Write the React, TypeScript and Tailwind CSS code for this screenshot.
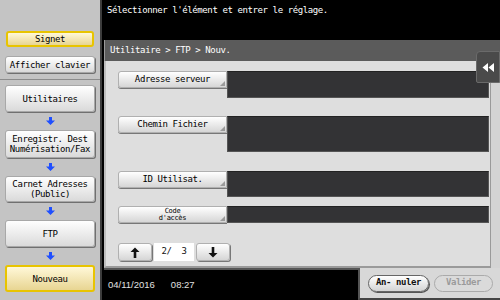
import React from 'react';

const mono = "font-['DejaVu_Sans_Mono','Liberation_Mono',monospace] text-[9px] tracking-[-0.4px]";

const BlueArrow = () => (
  <div className="h-[18px] flex items-center justify-center">
    <svg width="9" height="8" viewBox="0 0 9 8">
      <path d="M3 0h3v3.5h3L4.5 8 0 3.5h3z" fill="#1f4fff" />
    </svg>
  </div>
);

const SideButton = ({ label, yellow = false, h = 'h-[27px]' }: { label: React.ReactNode; yellow?: boolean; h?: string }) => (
  <div
    className={`${h} mx-[5px] rounded-[3px] flex items-center justify-center text-center leading-[10px] text-black ${mono} ${
      yellow
        ? 'bg-gradient-to-b from-[#fff8d8] to-[#e8d592] border-2 border-[#e8c400]'
        : 'bg-gradient-to-b from-white to-[#dadada] border border-[#a8a8a8] shadow-[1px_1px_0_#707070]'
    }`}
  >
    {label}
  </div>
);

const FieldRow = ({ label, fieldH, small = false }: { label: React.ReactNode; fieldH: string; small?: boolean }) => (
  <div className="flex items-start">
    <div
      className={`relative w-[109px] h-[17px] rounded-l-[3px] bg-gradient-to-b from-white to-[#d6d6d6] border border-[#b0b0b0] shadow-[0_1px_0_#777] flex items-center justify-center text-center text-black ${
        small ? "font-['DejaVu_Sans_Mono',monospace] text-[7px] leading-[7px] tracking-[-0.3px]" : mono
      }`}
    >
      {label}
      <div className="absolute right-[1px] bottom-[1px] w-0 h-0 border-l-[5px] border-l-transparent border-b-[5px] border-b-[#9a9a9a]" />
    </div>
    <div className={`flex-1 ${fieldH} bg-[#333335] border border-[#555] border-t-[#222]`} />
  </div>
);

export default function App() {
  return (
    <div className="w-[500px] h-[300px] flex bg-black overflow-hidden">
      {/* sidebar */}
      <div className="w-[102px] h-full bg-[#c4c4c4] border-r-2 border-[#3c3c3c] flex flex-col">
        <div className="h-[80px] pt-[31px] flex flex-col gap-[9px] border-b border-[#8c8c8c]">
          <SideButton label="Signet" yellow h="h-[16px] mx-[6px]" />
          <SideButton label="Afficher clavier" h="h-[17px]" />
        </div>
        <div className="pt-[5px] flex flex-col">
          <SideButton label="Utilitaires" />
          <BlueArrow />
          <SideButton label={<span>Enregistr. Dest<br />Numérisation/Fax</span>} h="h-[28px]" />
          <BlueArrow />
          <SideButton label={<span>Carnet Adresses<br />(Public)</span>} h="h-[26px]" />
          <BlueArrow />
          <SideButton label="FTP" />
          <BlueArrow />
          <SideButton label="Nouveau" yellow h="h-[27px]" />
        </div>
      </div>

      {/* main */}
      <div className="flex-1 flex flex-col pl-[2px]">
        <div className={`h-[40px] px-[3px] pt-[4px] text-white ${mono} text-[9.5px]`}>
          Sélectionner l'élément et entrer le réglage.
        </div>

        <div className="relative h-[228px] flex flex-col">
          <div className={`h-[21px] bg-[#5b5b5b] border-l border-[#9a9a9a] flex items-center px-[5px] text-white ${mono} text-[9.5px]`}>
            Utilitaire &gt; FTP &gt; Nouv.
          </div>
          <div className="flex-1 flex">
            <div className="flex-1 bg-[#dedede] border-l-2 border-[#bdbdbd] border-b-2 border-b-[#9a9a9a] pl-[12px] pr-[1px] pt-[10px] flex flex-col">
              <FieldRow label="Adresse serveur" fieldH="h-[27px]" />
              <div className="h-[18px]" />
              <FieldRow label="Chemin Fichier" fieldH="h-[36px]" />
              <div className="h-[19px]" />
              <FieldRow label="ID Utilisat." fieldH="h-[26px]" />
              <div className="h-[9px]" />
              <FieldRow label={<span>Code<br />d'accès</span>} fieldH="h-[17px]" small />
              <div className="h-[20px] shrink-0" />
              <div className="flex items-center h-[18px]">
                <div className="w-[34px] h-[18px] rounded-[3px] bg-gradient-to-b from-white to-[#d6d6d6] border border-[#b0b0b0] shadow-[1px_1px_0_#777] flex items-center justify-center">
                  <svg width="10" height="11" viewBox="0 0 10 11">
                    <path d="M5 0.5L9.5 5H6.3v6H3.7V5H0.5z" fill="#111" />
                  </svg>
                </div>
                <div className={`w-[40px] h-[18px] mx-[2px] bg-white flex items-center justify-center text-[#111] ${mono}`}>
                  2/&nbsp;&nbsp;3
                </div>
                <div className="w-[34px] h-[18px] rounded-[3px] bg-gradient-to-b from-white to-[#d6d6d6] border border-[#b0b0b0] shadow-[1px_1px_0_#777] flex items-center justify-center">
                  <svg width="10" height="11" viewBox="0 0 10 11">
                    <path d="M5 10.5L9.5 6H6.3V0H3.7v6H0.5z" fill="#111" />
                  </svg>
                </div>
              </div>
            </div>
            <div className="w-[10px] bg-[#d4d4d4] border-l border-[#9a9a9a]" />
          </div>

          {/* side tab */}
          <div className="absolute right-0 top-[11px] w-[24px] h-[32px] rounded-tl-[4px] rounded-bl-[2px] bg-[#4a4a4a] border border-[#6a6a6a] flex items-center justify-center">
            <svg width="12" height="9" viewBox="0 0 12 9">
              <path d="M6 0v9L0.5 4.5z M12 0v9L6.5 4.5z" fill="#fff" />
            </svg>
          </div>
        </div>

        <div className="flex-1 flex">
          <div className="flex-1 border-t-2 border-[#555] flex items-center pl-[4px] gap-[16px] text-[#e0e0e0] font-['Liberation_Sans',Arial,sans-serif] text-[9.5px]">
            <span>04/11/2016</span>
            <span>08:27</span>
          </div>
          <div className="w-[142px] bg-[#d8d8d8] border-l-2 border-[#555] border-b-2 border-b-[#444] flex items-center gap-[5px] pl-[8px]">
            <div className={`w-[61px] h-[17px] rounded-full bg-gradient-to-b from-white to-[#d4d4d4] border border-[#666] shadow-[1px_1px_0_#555] flex items-center justify-center font-bold text-[#111] ${mono}`}>
              An- nuler
            </div>
            <div className={`w-[59px] h-[17px] rounded-full bg-[#dadada] border border-[#aaa] flex items-center justify-center font-bold text-[#9a9a9a] ${mono}`}>
              Valider
            </div>
          </div>
        </div>
      </div>
    </div>
  );
}
